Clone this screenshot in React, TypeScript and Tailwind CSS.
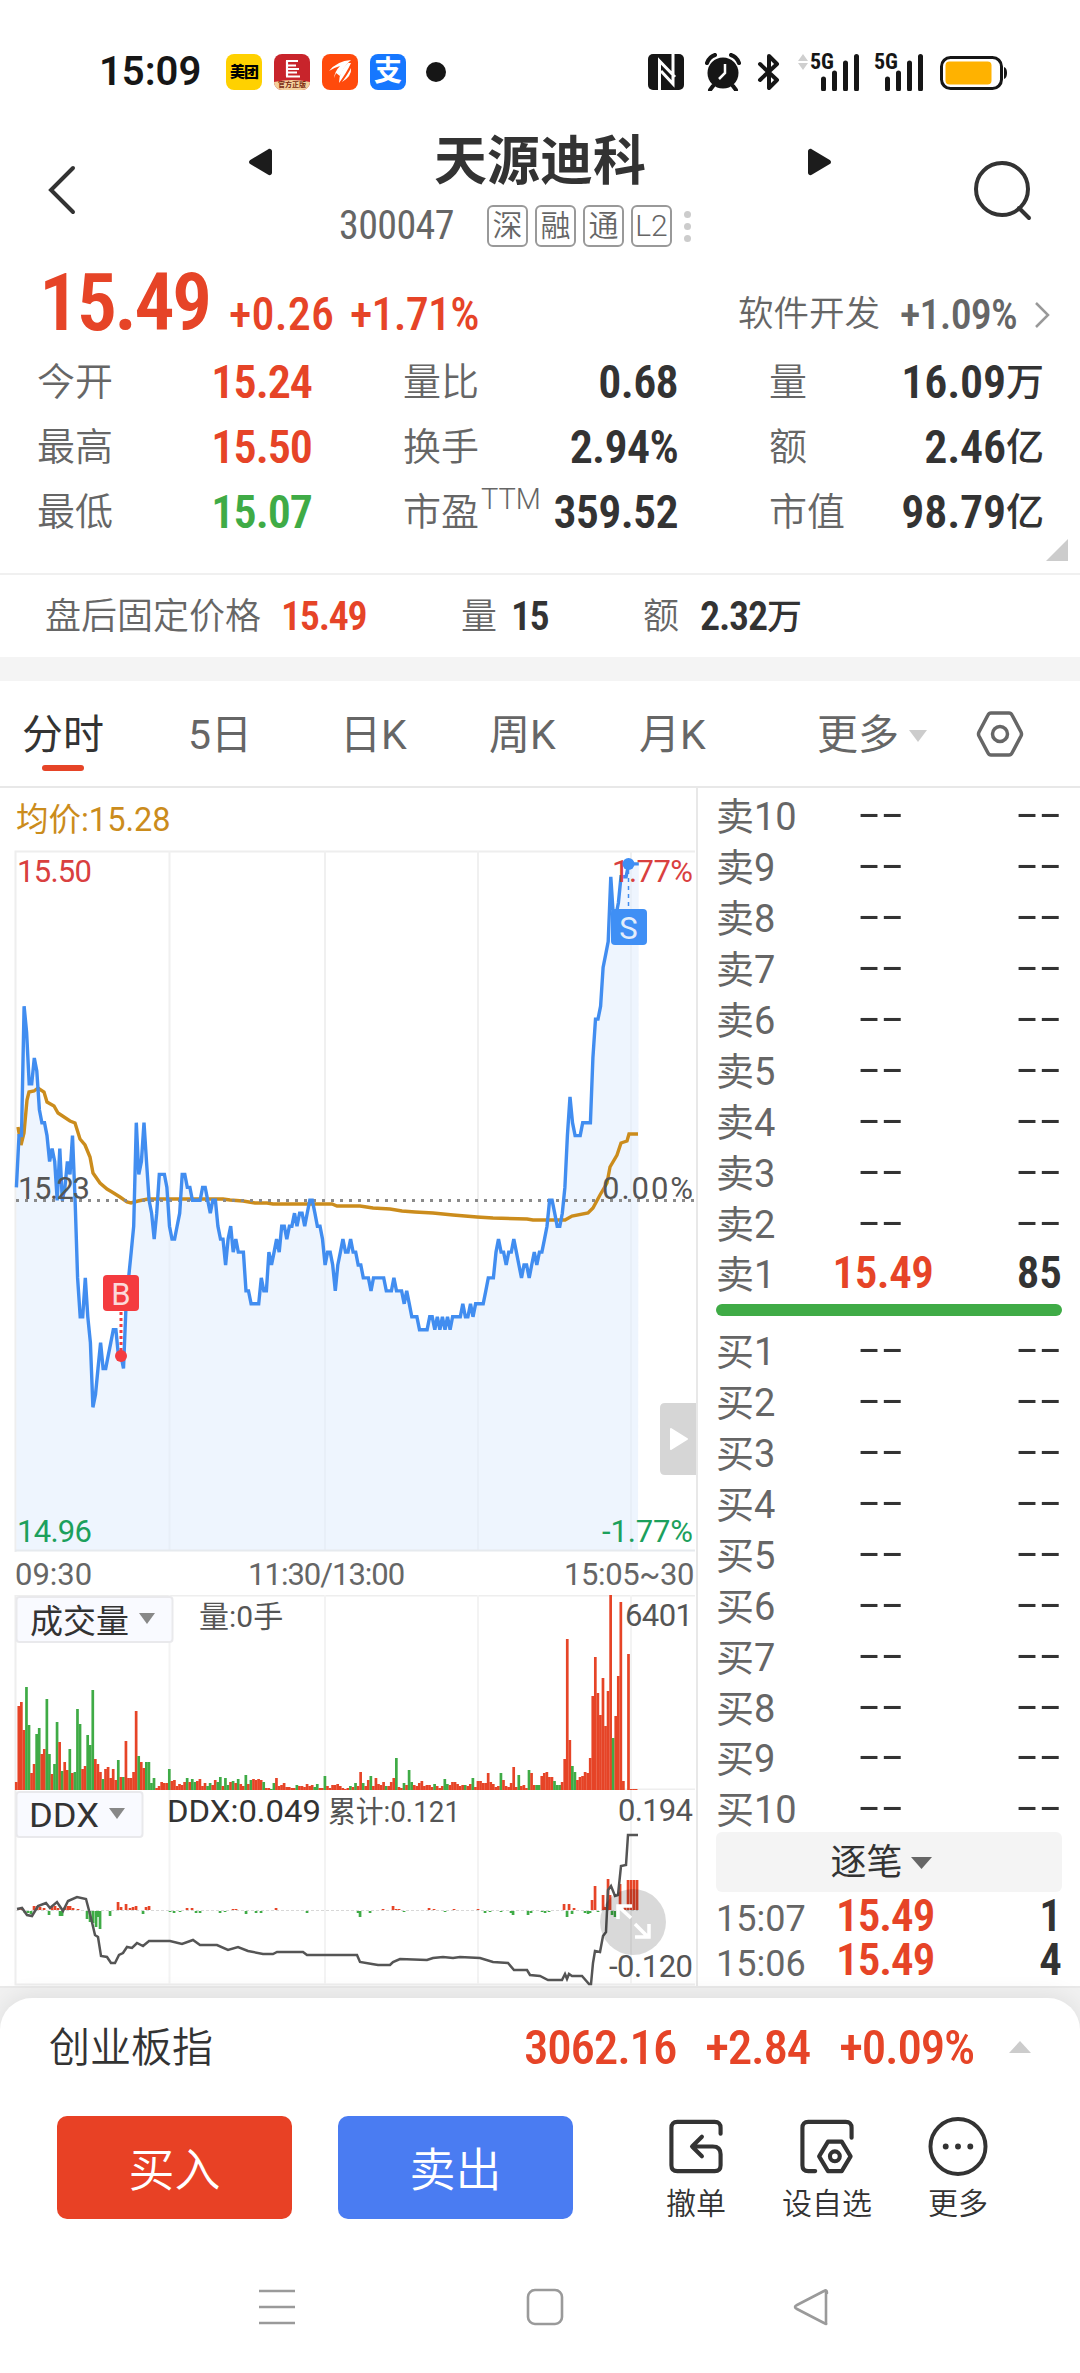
import { FaPlay } from "react-icons/fa";

const NUM = "font-stretch-75% font-semibold";

// price per minute, in cents away from the previous close (15.23)
const prices = [
  1, 5, 5, 15, 13, 9, 9, 11, 10, 7, 6, 6, 5, 3, 4, 3, 0, 4, 0, 1,
  3, 2, 5, 0, -6, -9, -9, -6, -9, -11, -16, -15, -13, -11, -13, -13, -12, -11, -10, -10,
  -12, -12, -13, -8, -6, -4, -2, 6, 2, 3, 6, 3, 0, -1, -3, -1, 2, 2, 2, 1,
  -2, -3, -3, -2, -1, 2, 2, 1, 1, 0, 0, 0, 0, 1, 1, 0, -1, 0, 0, -2,
  -3, -3, -5, -3, -2, -4, -3, -4, -4, -4, -7, -7, -8, -8, -8, -8, -6, -7, -7, -4,
  -5, -4, -3, -4, -2, -2, -3, -2, -2, -1, -2, -1, -1, -2, -1, 0, 0, -1, -2, -2,
  -3, -5, -4, -4, -5, -7, -5, -4, -3, -4, -4, -3, -4, -4, -5, -5, -6, -6, -6, -7,
  -6, -6, -6, -6, -6, -7, -7, -7, -6, -7, -7, -7, -8, -7, -8, -9, -9, -9, -10, -10,
  -10, -10, -9, -9, -10, -9, -10, -9, -10, -9, -10, -9, -9, -9, -9, -8, -9, -9, -8, -9,
  -8, -8, -8, -8, -7, -6, -6, -6, -4, -3, -4, -4, -5, -4, -4, -3, -4, -5, -6, -5,
  -5, -6, -5, -4, -5, -4, -4, -3, -2, 0, 0, -1, -2, -2, -1, 1, 5, 8, 6, 5,
  5, 5, 6, 6, 6, 6, 11, 14, 14, 15, 18, 19, 20, 25, 22, 22, 23, 25, 25, 25,
  26, 26, 26, 26, 26,
];

// positive = red bar, negative = green bar
const volumes = [
  8, 84, 88, 60, -103, -65, 17, 26, -56, -62, 36, 41, -91, -36, 16, -26, -68, 48, -19, 28,
  20, -41, 17, -18, -81, -66, 21, 24, -55, -45, -100, 31, 26, 18, -11, 21, 23, 12, 21, 10,
  -30, 13, -13, 49, 12, 12, 18, 79, -34, 28, 22, -28, -28, -7, -12, 2, 4, 8, 7, 7,
  -21, 9, 10, 4, 6, 5, 8, -12, 8, -11, -8, 9, 11, 4, 7, -4, -7, 5, 10, -8,
  -13, 4, -12, -5, 8, -9, 7, -11, 6, 4, -15, 6, -10, 11, 10, 11, 10, -8, 2, 2,
  -1, -7, 12, 4, 5, 7, 3, 3, 2, 2, -5, 4, 4, 3, 6, 4, 5, -3, -6, 2,
  2, -14, 4, 2, 5, 5, 6, 4, 2, 1, 2, -4, 3, -7, 4, 18, -7, 4, 10, -14,
  4, 12, 6, 5, 8, -4, 4, 8, 12, -32, 3, 2, -7, 5, -20, -8, 5, 4, 7, 9,
  4, 5, 5, 3, -6, 4, 2, 4, -11, -6, 5, 8, 8, 6, 4, 5, -5, 4, 6, -12,
  3, 9, 9, 7, 7, 17, 8, 6, 3, 4, -17, 10, 4, 3, 7, 23, 3, -15, 4, 5,
  2, -20, 17, 5, -5, -5, 14, 17, 18, 13, 13, -9, -5, -5, 8, 31, 151, 50, -24, -18,
  10, 13, 14, 18, 17, 32, 94, 133, 97, 75, 112, 64, 99, 195, -52, 74, 114, 188, 9, 0,
  136, 1, 1, 1,
];

// [x, height], positive goes up and is red
const ddx: [number, number][] = [
  [19, 2], [22, 2], [25, -2], [28, -2], [31, -3], [34, 4], [37, 4], [40, 3], [44, 2], [49, -4], [52, 3], [55, 4],
  [58, 2], [60, -5], [62, -5], [65, 3], [68, 4], [70, 4], [73, 2], [78, 1], [87, -8], [90, -11], [93, -12], [96, -16],
  [98, -6], [100, -18], [110, -5], [118, 8], [121, 3], [126, 6], [130, 2], [133, 3], [136, 4], [143, -3], [146, 3], [149, 4],
  [170, -1], [174, -2], [180, -1], [187, 2], [192, 2], [196, -2], [200, -2], [220, -2], [225, -1], [233, 1], [236, 1], [246, -3],
  [256, -2], [261, -2], [276, 2], [307, -2], [358, -2], [360, -6], [370, -2], [383, 1], [393, 4], [396, 1], [399, 1], [404, -1],
  [429, 2], [434, 1], [445, -1], [454, 1], [478, 1], [485, -2], [490, -1], [501, -1], [511, -2], [513, -4], [528, -4], [531, -2],
  [542, -1], [545, -2], [549, -1], [564, 6], [567, -6], [569, 6], [572, -3], [574, 2], [585, -2], [588, -3], [590, -2], [592, 10],
  [595, 24], [598, -1], [603, 15], [605, 3], [608, 31], [610, 15], [612, -4], [615, -6], [620, 26], [625, 4], [628, 30], [631, 30],
  [634, 30], [637, 30],
];

const STEP = 2.551;
const pricePoints = prices.map((p, i) => `${(16.4 + i * STEP).toFixed(1)},${(350.3 - p * 12.94).toFixed(1)}`).join(" ");

const AVG =
  "18,277 21,295 24,283 27,250 29,242 34,241 38,238 44,242 47,252 54,256 58,263 70,271 75,273 80,289 85,295 90,307 93,323 100,333 107,339 112,342 120,347 127,352 131,353 138,351 148,349 223,349 230,350 243,351 255,353 267,353 273,354 332,354 337,356 360,356 373,358 390,359 402,361 415,362 433,363 453,365 477,367 493,368 527,369 533,370 565,370 572,366 588,363 593,358 600,345 607,333 610,317 617,305 621,293 627,291 629,284 638,284";

const DDX_LINE =
  "17,119 22,118 27,125 32,126 38,116 46,113 50,118 57,112 63,121 68,111 77,107 86,109 91,128 95,145 98,147 101,166 107,167 111,173 115,173 119,165 123,163 127,157 132,158 137,153 143,156 149,151 170,151 182,154 193,150 200,155 217,155 228,160 238,157 248,161 263,164 273,164 277,162 303,162 307,165 357,165 360,172 372,174 378,175 390,175 393,172 400,169 427,170 433,168 443,167 453,168 460,167 480,168 493,172 508,173 514,180 527,180 530,185 540,186 548,190 562,190 565,184 567,189 569,184 572,186 582,186 589,194 591,194 593,173 595,161 600,162 603,146 606,142 608,100 611,96 615,106 618,105 621,76 626,75 628,45 638,45";

const GRID = [169.5, 325, 478, 631];

const AppIcons = () => (
  <div className="flex gap-3">
    <div className="flex size-9 items-center justify-center rounded-lg bg-[#ffd100] text-[15px] font-black tracking-[-1px] text-black">美团</div>
    <div className="relative size-9 overflow-hidden rounded-lg bg-[#c8242b]">
      <svg viewBox="0 0 36 36" className="size-9">
        <path d="M12 7H24M13 7V22M13 11.500H22M13 15H25M13 18.500H23M12 22.500H26" stroke="#fff" strokeWidth="2.200" fill="none" />
        <path d="M0 28Q18 24 36 28V36H0Z" fill="#f3cf9b" />
      </svg>
      <span className="absolute inset-x-0 bottom-0 text-center text-[7px] leading-[9px] font-bold text-[#7a2a10]">官方正版</span>
    </div>
    <svg viewBox="0 0 36 36" className="size-9">
      <rect width="36" height="36" rx="8" fill="#ff4a0c" />
      <path d="M7 17Q15 7 29 6Q22 12 18 22L14 19L12 24Q13 17 18 12Q11 14 7 17Z" fill="#fff" />
      <path d="M29 9Q25 18 17 29Q17 17 26 9ZM29 14Q30 22 20 28Q26 20 29 14Z" fill="#fff" />
    </svg>
    <div className="flex size-9 items-center justify-center rounded-lg bg-[#1677ff] text-[28px] font-semibold text-white">支</div>
  </div>
);

const Bars = () => (
  <svg viewBox="0 0 40 38" className="h-[38px] w-10">
    <path d="M3.500 26V36M14.500 20V36M25.500 10V36M36.500 3.500V36" stroke="#161616" strokeWidth="5" strokeLinecap="round" />
  </svg>
);

const StatusBar = () => (
  <div className="flex h-[120px] items-start justify-between pt-[54px] pr-[72px] pl-[99px]">
    <div className="flex h-9 items-center">
      <span className="w-[127px] text-[40px] leading-none font-semibold text-[#161616]">15:09</span>
      <AppIcons />
      <div className="ml-5 size-5 rounded-full bg-[#161616]" />
    </div>
    <div className="flex h-9 items-center">
      <svg viewBox="0 0 36 36" className="size-9">
        <rect width="36" height="36" rx="5" fill="#161616" />
        <path d="M11.500 36V7L27 23M25 0V30L13 17" stroke="#fff" strokeWidth="3" fill="none" />
      </svg>
      <svg viewBox="0 0 36 38" className="ml-[21px] h-[38px] w-9">
        <circle cx="18" cy="20" r="15.500" fill="#161616" />
        <path d="M2 10Q4 4 10 2M34 10Q32 4 26 2M8 33L5 37M28 33L31 37" stroke="#161616" strokeWidth="4" fill="none" strokeLinecap="round" />
        <path d="M20 11V20L14 26" stroke="#fff" strokeWidth="2.500" fill="none" />
      </svg>
      <svg viewBox="0 0 24 38" className="ml-4 h-[38px] w-6">
        <path d="M3 11L20 27L12 35V3L20 11L3 27" stroke="#161616" strokeWidth="4" fill="none" strokeLinejoin="round" strokeLinecap="round" />
      </svg>
      <svg viewBox="0 0 10 38" className="ml-[17px] h-[38px] w-2.5 self-center">
        <path d="M0 8L5 1L10 8ZM0 10L5 17L10 10Z" fill="#cfcfcf" />
      </svg>
      <div className="relative ml-3">
        <Bars />
        <span className="absolute -top-0.5 -left-2.5 text-[22px] leading-none font-bold text-[#161616] font-stretch-75%">5G</span>
      </div>
      <div className="relative ml-6">
        <Bars />
        <span className="absolute -top-0.5 -left-2.5 text-[22px] leading-none font-bold text-[#161616] font-stretch-75%">5G</span>
      </div>
      <svg viewBox="0 0 68 36" className="ml-4 h-9 w-[68px]">
        <rect x="1.500" y="3.500" width="60" height="31" rx="9" fill="#fff" stroke="#161616" strokeWidth="3" />
        <rect x="5.500" y="7.500" width="46" height="23" rx="4" fill="#ffb200" />
        <path d="M64 13Q67 14 67 19Q67 24 64 25Z" fill="#161616" />
      </svg>
    </div>
  </div>
);

const Header = () => (
  <div className="flex h-[134px] justify-between pr-[46px] pl-[47px]">
    <svg viewBox="0 0 30 50" className="mt-[45px] h-[50px] w-[30px]">
      <path d="M26 3L4 25L26 47" fill="none" stroke="#333" strokeWidth="4" strokeLinecap="round" />
    </svg>
    <div className="ml-[29px] flex h-[78px] w-[582px] items-center justify-between">
      <FaPlay className="mt-1.5 h-7 w-[23px] rotate-180 text-[#1c1c1c]" />
      <h1 className="mt-1.5 text-[53px] leading-none font-bold text-[#333]">天源迪科</h1>
      <FaPlay className="mt-1.5 h-7 w-[23px] text-[#1c1c1c]" />
    </div>
    <svg viewBox="0 0 60 62" className="mt-[39px] h-[62px] w-[60px]">
      <circle cx="28" cy="30" r="26" fill="none" stroke="#333" strokeWidth="4" />
      <path d="M45 49L55 59" stroke="#333" strokeWidth="4" strokeLinecap="round" />
    </svg>
  </div>
);

const CodeRow = () => (
  <div className="-mt-14 flex h-14 items-center pl-[339px]">
    <span className="w-[148px] text-[40px] leading-none tracking-[-0.6px] text-[#666] font-stretch-75%">300047</span>
    <div className="flex gap-[7px]">
      {["深", "融", "通", "L2"].map((t) => (
        <span key={t} className="flex h-[42px] w-[41px] items-center justify-center rounded-md border-2 border-[#999] text-[30px] leading-none font-[350] text-[#666]">
          {t}
        </span>
      ))}
    </div>
    <div className="ml-3 flex flex-col gap-[5px]">
      <i className="size-[7px] rounded-full bg-[#ccc]" />
      <i className="size-[7px] rounded-full bg-[#ccc]" />
      <i className="size-[7px] rounded-full bg-[#ccc]" />
    </div>
  </div>
);

const stats = [
  ["今开", "15.24", "text-[#e64427]", "量比", "0.68", "量", "16.09", "万"],
  ["最高", "15.50", "text-[#e64427]", "换手", "2.94%", "额", "2.46", "亿"],
  ["最低", "15.07", "text-[#3fab46]", "市盈", "359.52", "市值", "98.79", "亿"],
];

const Quote = () => (
  <div className="relative h-[321px] border-b-2 border-[#f0f0f0]">
    <div className="flex h-[94px] items-center pr-[29px] pl-[39px] text-[#e64427]">
      <span className={`${NUM} mt-1 w-[190px] text-[80px] leading-none tracking-[-2.6px]`}>15.49</span>
      <span className="mt-[26px] w-[121px] text-[46px] leading-none font-medium tracking-[0.2px] font-stretch-75%">+0.26</span>
      <span className="mt-[26px] text-[46px] leading-none font-medium tracking-[-0.8px] font-stretch-75%">+1.71%</span>
      <div className="mt-7 ml-auto flex items-center text-[#666]">
        <span className="w-[162px] text-[35.500px] leading-none font-[350]">软件开发</span>
        <span className="w-[134px] text-[42px] leading-none font-medium tracking-[-0.8px] font-stretch-75%">+1.09%</span>
        <svg viewBox="0 0 17 28" className="h-7 w-[17px]">
          <path d="M2 2L14 14L2 26" fill="none" stroke="#999" strokeWidth="2.500" />
        </svg>
      </div>
    </div>
    {stats.map(([a, av, color, b, bv, c, cv, unit]) => (
      <div key={a} className="flex h-[65px] items-center pt-0.5 pr-[36px] pl-[37px] text-[38px] leading-none font-[350] whitespace-nowrap text-[#666]">
        <span className="w-[120px]">{a}</span>
        <span className={`${NUM} ${color} w-[155px] text-right text-[46px] tracking-[-1px]`}>{av}</span>
        <span className="ml-[91px] w-[78px]">{b}</span>
        <span className="w-[65px] -translate-y-3 text-[29px]">{b === "市盈" && "TTM"}</span>
        <span className={`${NUM} flex w-[132px] justify-end text-[46px] tracking-[-0.7px] text-[#333]`}>{bv}</span>
        <span className="ml-[91px]">{c}</span>
        <span className={`${NUM} ml-auto text-[46px] tracking-[-0.2px] text-[#333]`}>{cv}</span>
        <span className="text-[38px] font-medium text-[#333]">{unit}</span>
      </div>
    ))}
    <svg viewBox="0 0 22 22" className="absolute right-3 bottom-3 size-[22px]">
      <path d="M22 0V22H0Z" fill="#ccc" />
    </svg>
  </div>
);

const AfterHours = () => (
  <div className="flex h-[82px] items-center pt-0.5 pl-[45px] text-[36px] leading-none font-[350] text-[#666]">
    <span className="w-[236px]">盘后固定价格</span>
    <span className={`${NUM} w-[180px] text-[40px] tracking-[-1.3px] text-[#e64427]`}>15.49</span>
    <span className="w-[50px]">量</span>
    <span className={`${NUM} w-[132px] text-[40px] tracking-[-1.5px] text-[#333]`}>15</span>
    <span className="w-[57px]">额</span>
    <span className={`${NUM} text-[40px] tracking-[-1.2px] text-[#333]`}>2.32</span>
    <span className="text-[35px] font-medium text-[#333]">万</span>
  </div>
);

const Tabs = () => (
  <div className="relative flex h-[107px] items-center border-b-2 border-[#e8e8e8] pt-1 pl-[22px] text-[41px] leading-none text-[#666]">
    <span className="w-[166px] text-[#333]">分时</span>
    <span className="w-[152px]">5日</span>
    <span className="w-[149px]">日K</span>
    <span className="w-[150px]">周K</span>
    <span className="w-[178px]">月K</span>
    <span>更多</span>
    <svg viewBox="0 0 18 12" className="ml-2.5 h-3 w-[18px]">
      <path d="M0 0H18L9 12Z" fill="#ccc" />
    </svg>
    <svg viewBox="0 0 48 46" className="-mt-1 ml-[49px] h-[46px] w-12">
      <path d="M15 2H33Q35 2 36 4L45 21Q46 23 45 25L36 42Q35 44 33 44H15Q13 44 12 42L3 25Q2 23 3 21L12 4Q13 2 15 2Z" fill="none" stroke="#666" strokeWidth="3.500" />
      <circle cx="24" cy="23" r="7.500" fill="none" stroke="#666" strokeWidth="3.500" />
    </svg>
    <div className="absolute bottom-[15px] left-[42px] h-1.5 w-[42px] rounded-full bg-[#e64427]" />
  </div>
);

const PriceChart = () => (
  <svg viewBox="0 0 696 702" className="block h-[702px] w-[696px]" fontSize="31" fontWeight="400">
    <path d="M15.500 702V1.500H695" fill="none" stroke="#eee" strokeWidth="2" />
    {GRID.map((x) => (
      <path key={x} d={`M${x} 1V700`} stroke="#f0f0f0" strokeWidth="2" />
    ))}
    <polygon points={`16.400,700 ${pricePoints} 638,700`} fill="#e2effd" fillOpacity="0.6" />
    <path d="M15 700.500H695" stroke="#e6eaee" strokeWidth="2" />
    <polyline points={AVG} fill="none" stroke="#cb8c1c" strokeWidth="3.400" />
    <path d="M16 350.500H695" stroke="#8a8a8a" strokeWidth="3" strokeDasharray="3 6" />
    <polyline points={pricePoints} fill="none" stroke="#418df0" strokeWidth="3.400" />
    <text x="17" y="32" fill="#d9403f" textLength="75">15.50</text>
    <text x="612" y="32" fill="#d9403f" textLength="81">1.77%</text>
    <text x="18" y="349" fill="#555" textLength="72">15.23</text>
    <text x="602" y="349" fill="#555" textLength="91">0.00%</text>
    <text x="17" y="692" fill="#1ca05c" textLength="75">14.96</text>
    <text x="602" y="692" fill="#1ca05c" textLength="91">-1.77%</text>
    <path d="M628.500 20V60" stroke="#418df0" strokeWidth="1.500" strokeDasharray="4 4" />
    <circle cx="628.500" cy="14" r="6" fill="#3f8ff5" />
    <rect x="611" y="59" width="36" height="36" rx="4" fill="#3f8ff5" />
    <text x="628.500" y="89" fill="#e3edfb" textAnchor="middle">S</text>
    <path d="M121 462V502" stroke="#f43b3f" strokeWidth="3" strokeDasharray="3 3" />
    <circle cx="121" cy="506" r="6" fill="#f43b3f" />
    <rect x="103" y="425" width="36" height="36" rx="4" fill="#f43b3f" />
    <text x="121" y="455" fill="#fbdada" textAnchor="middle">B</text>
    <path d="M696 553H665Q660 553 660 558V620Q660 625 665 625H696Z" fill="#d6d6d6" />
    <path d="M671 579L687 589L671 599Z" fill="#fff" stroke="#fff" strokeWidth="2" strokeLinejoin="round" />
  </svg>
);

const VolumeChart = () => (
  <svg viewBox="0 0 696 195" className="block h-[195px] w-[696px]" fontSize="31" fontWeight="400">
    <path d="M15.500 195V0.500H695M15 194.500H695" fill="none" stroke="#eee" strokeWidth="2" />
    {GRID.map((x) => (
      <path key={x} d={`M${x} 0V194`} stroke="#f3f3f3" strokeWidth="2" />
    ))}
    <rect x="16.500" y="2" width="156" height="45" rx="3" fill="#f9faff" stroke="#e9e9ec" strokeWidth="2" />
    <text x="30" y="38" fontSize="33" fill="#333">成交量</text>
    <path d="M139 18H155L147 29Z" fill="#888" />
    <text x="199" y="32" fill="#555" fontSize="30">量:0手</text>
    {volumes.map((v, i) => (
      <rect key={i} x={14.900 + i * STEP} y={195 - Math.abs(v)} width="2.700" height={Math.abs(v)} fill={v > 0 ? "#e64427" : "#3fab46"} />
    ))}
    <text x="625" y="31" fill="#555" textLength="68">6401</text>
  </svg>
);

const DdxChart = () => (
  <svg viewBox="0 0 696 196" className="block h-[196px] w-[696px]" fontSize="31" fontWeight="400">
    <path d="M15.500 0V194.500H695" fill="none" stroke="#eee" strokeWidth="2" />
    {GRID.map((x) => (
      <path key={x} d={`M${x} 0V194`} stroke="#f3f3f3" strokeWidth="2" />
    ))}
    <path d="M16 120.500H638" stroke="#d8d8d8" strokeWidth="1" strokeDasharray="3 2" />
    <rect x="16.500" y="2" width="126" height="45" rx="3" fill="#f9faff" stroke="#e9e9ec" strokeWidth="2" />
    <text x="29" y="37" fontSize="34" fill="#333" textLength="70" lengthAdjust="spacingAndGlyphs">DDX</text>
    <path d="M109 18H125L117 29Z" fill="#888" />
    <text x="167" y="32" fill="#333" textLength="154" lengthAdjust="spacingAndGlyphs">DDX:0.049</text>
    <text x="328" y="32" fill="#555" fontSize="30" textLength="132" lengthAdjust="spacingAndGlyphs">累计:0.121</text>
    {ddx.map(([x, h]) => (
      <rect key={x} x={x - 1.300} y={h > 0 ? 120 - h : 121} width="2.700" height={Math.abs(h)} fill={h > 0 ? "#e64427" : "#3fab46"} />
    ))}
    <polyline points={DDX_LINE} fill="none" stroke="#555" strokeWidth="2.500" />
    <text x="618" y="31" fill="#555" textLength="75">0.194</text>
    <circle cx="633" cy="132" r="33" fill="#000" fillOpacity="0.15" />
    <path d="M631 128L619 117M618 129V116H632M635 134L647 146M649 134V147H635" fill="none" stroke="#fff" strokeWidth="3.500" />
    <text x="609" y="187" fill="#555" textLength="84">-0.120</text>
  </svg>
);

const Dashes = () => (
  <span className="-mt-1 inline-block w-[46px] text-center font-['Liberation_Sans'] text-[38px] font-normal text-[#333]">
    <span className="inline-block scale-x-[1.82]">--</span>
  </span>
);

const BookRow = ({ label, price, amount }: { label: string; price?: string; amount?: string }) => (
  <div className="flex h-[50.900px] items-center justify-between leading-none">
    <span className="mt-1 w-20 text-[38px] whitespace-nowrap text-[#666]">{label}</span>
    <span className="ml-3.5 flex w-[140px] justify-center">
      {price ? (
        <b className={`${NUM} -mt-0.5 ml-1 text-[45px] tracking-[-0.5px] text-[#e64427]`}>{price}</b>
      ) : (
        <Dashes />
      )}
    </span>
    <span className="flex w-[110px] justify-end">
      {amount ? <b className={`${NUM} -mt-0.5 text-[45px] text-[#333]`}>{amount}</b> : <Dashes />}
    </span>
  </div>
);

const levels = [1, 2, 3, 4, 5, 6, 7, 8, 9, 10];

const OrderBook = () => (
  <div className="w-[382px] pt-0.5 pr-[18px] pl-[18px]">
    {[...levels].reverse().map((n) => (
      <BookRow key={n} label={`卖${n}`} price={n === 1 ? "15.49" : undefined} amount={n === 1 ? "85" : undefined} />
    ))}
    <div className="mt-[5px] mb-[9px] h-3 rounded-full bg-[#3fab46]" />
    {levels.map((n) => (
      <BookRow key={n} label={`买${n}`} />
    ))}
    <div className="-mt-0.5 flex h-[60px] items-center justify-center rounded-md bg-[#f4f4f4] pt-0.5 pr-4 text-[36px] leading-none text-[#333]">
      逐笔
      <svg viewBox="0 0 21 12" className="ml-2 h-3 w-[21px]">
        <path d="M0 0H21L10.500 12Z" fill="#666" />
      </svg>
    </div>
    {[["15:07", "1"], ["15:06", "4"]].map(([time, n]) => (
      <div key={time} className="flex h-[44.500px] items-center pt-0.5 leading-none">
        <span className="mt-2 w-[120px] text-[36px] text-[#666] font-stretch-95%">{time}</span>
        <b className={`${NUM} text-[45px] tracking-[-1px] text-[#e64427]`}>15.49</b>
        <b className={`${NUM} ml-auto text-[45px] text-[#333]`}>{n}</b>
      </div>
    ))}
  </div>
);

const Actions = () => (
  <div className="mt-5 flex h-[103px] pl-[57px] text-[46px] leading-none font-[350] text-white">
    <button className="w-[235px] rounded-[10px] bg-[#e84125] pt-1">买入</button>
    <button className="ml-[46px] w-[235px] rounded-[10px] bg-[#4a7cf2] pt-1">卖出</button>
    <div className="ml-[78px] flex gap-7 pt-px text-[30px] text-[#333]">
      <div className="flex w-[90px] flex-col items-center">
        <svg viewBox="0 0 60 60" className="size-[60px]" fill="none" stroke="#333" strokeWidth="4.200" strokeLinecap="round" strokeLinejoin="round">
          <path d="M55 17V11Q55 5 49 5H11Q5 5 5 11V49Q5 55 11 55H49Q55 55 55 49V38Q55 30 47 30H27M36 20L26 30L36 40" />
        </svg>
        <span className="mt-[13px]">撤单</span>
      </div>
      <div className="-mr-1 -ml-[3px] flex w-[122px] flex-col items-center">
        <svg viewBox="0 0 60 60" className="size-[60px]" fill="none" stroke="#333" strokeWidth="4.200" strokeLinecap="round" strokeLinejoin="round">
          <path d="M55 21V11Q55 5 49 5H11Q5 5 5 11V49Q5 55 11 55H18" />
          <path d="M31 25H45L54 40L45 55H31L22 40Z" />
          <circle cx="38" cy="40" r="5" />
        </svg>
        <span className="mt-[13px] whitespace-nowrap">设自选</span>
      </div>
      <div className="ml-px flex w-[90px] flex-col items-center">
        <svg viewBox="0 0 60 60" className="size-[60px]">
          <circle cx="30" cy="30" r="28" fill="none" stroke="#333" strokeWidth="4" />
          <path d="M17.500 30h.01M30 30h.01M42.500 30h.01" stroke="#333" strokeWidth="6" strokeLinecap="round" />
        </svg>
        <span className="mt-[13px]">更多</span>
      </div>
    </div>
  </div>
);

const Footer = () => (
  <div className="relative z-10 h-[387px] border-t-2 border-[#e9e9e9] bg-[#f1f1f1] pt-2.5">
    <div className="h-full rounded-t-[32px] bg-white shadow-[0_-4px_22px_rgba(0,0,0,0.07)]">
      <div className="flex h-[98px] items-center pr-[49px] pl-[49px] text-[#e64427]">
        <span className="mt-0.5 text-[41px] leading-none font-[350] text-[#333]">创业板指</span>
        <div className="ml-auto flex gap-[29px] text-[49px] leading-none font-medium tracking-[-1.2px] font-stretch-75%">
          <span>3062.16</span>
          <span>+2.84</span>
          <span>+0.09%</span>
        </div>
        <svg viewBox="0 0 22 12" className="ml-[35px] h-3 w-[22px]">
          <path d="M0 12H22L11 0Z" fill="#ccc" />
        </svg>
      </div>
      <Actions />
      <svg viewBox="0 0 1080 40" className="mt-[68px] block h-10 w-[1080px]" fill="none" stroke="#9a9a9a" strokeWidth="2.600">
        <path d="M259 4H295M259 20H295M259 36H295" />
        <rect x="528" y="3" width="34" height="34" rx="7" />
        <path d="M826 4V36Q827 38 824 36L797 22Q793 20 797 18L824 4Q827 2 827 6Z" strokeLinejoin="round" />
      </svg>
    </div>
  </div>
);

export default function App() {
  return (
    <div className="flex h-[2373px] w-[1080px] flex-col overflow-hidden bg-white font-['Roboto','Noto_Sans_CJK_SC',sans-serif]">
      <StatusBar />
      <Header />
      <CodeRow />
      <Quote />
      <AfterHours />
      <div className="h-6 bg-[#f4f4f4]" />
      <Tabs />
      <div className="flex h-[1198px]">
        <div className="w-[698px] border-r-2 border-[#e8e8e8]">
          <div className="flex h-[62px] items-center pt-[3px] pl-4 text-[32.500px] leading-none text-[#cb8c1c]">均价:15.28</div>
          <PriceChart />
          <div className="flex h-[43px] items-center justify-between pt-0.5 pr-0.5 pl-[15px] text-[31px] leading-none text-[#666]">
            <span>09:30</span>
            <span className="mr-1 tracking-[-1px]">11:30/13:00</span>
            <span className="tracking-[-0.4px]">15:05~30</span>
          </div>
          <VolumeChart />
          <DdxChart />
        </div>
        <OrderBook />
      </div>
      <Footer />
    </div>
  );
}
